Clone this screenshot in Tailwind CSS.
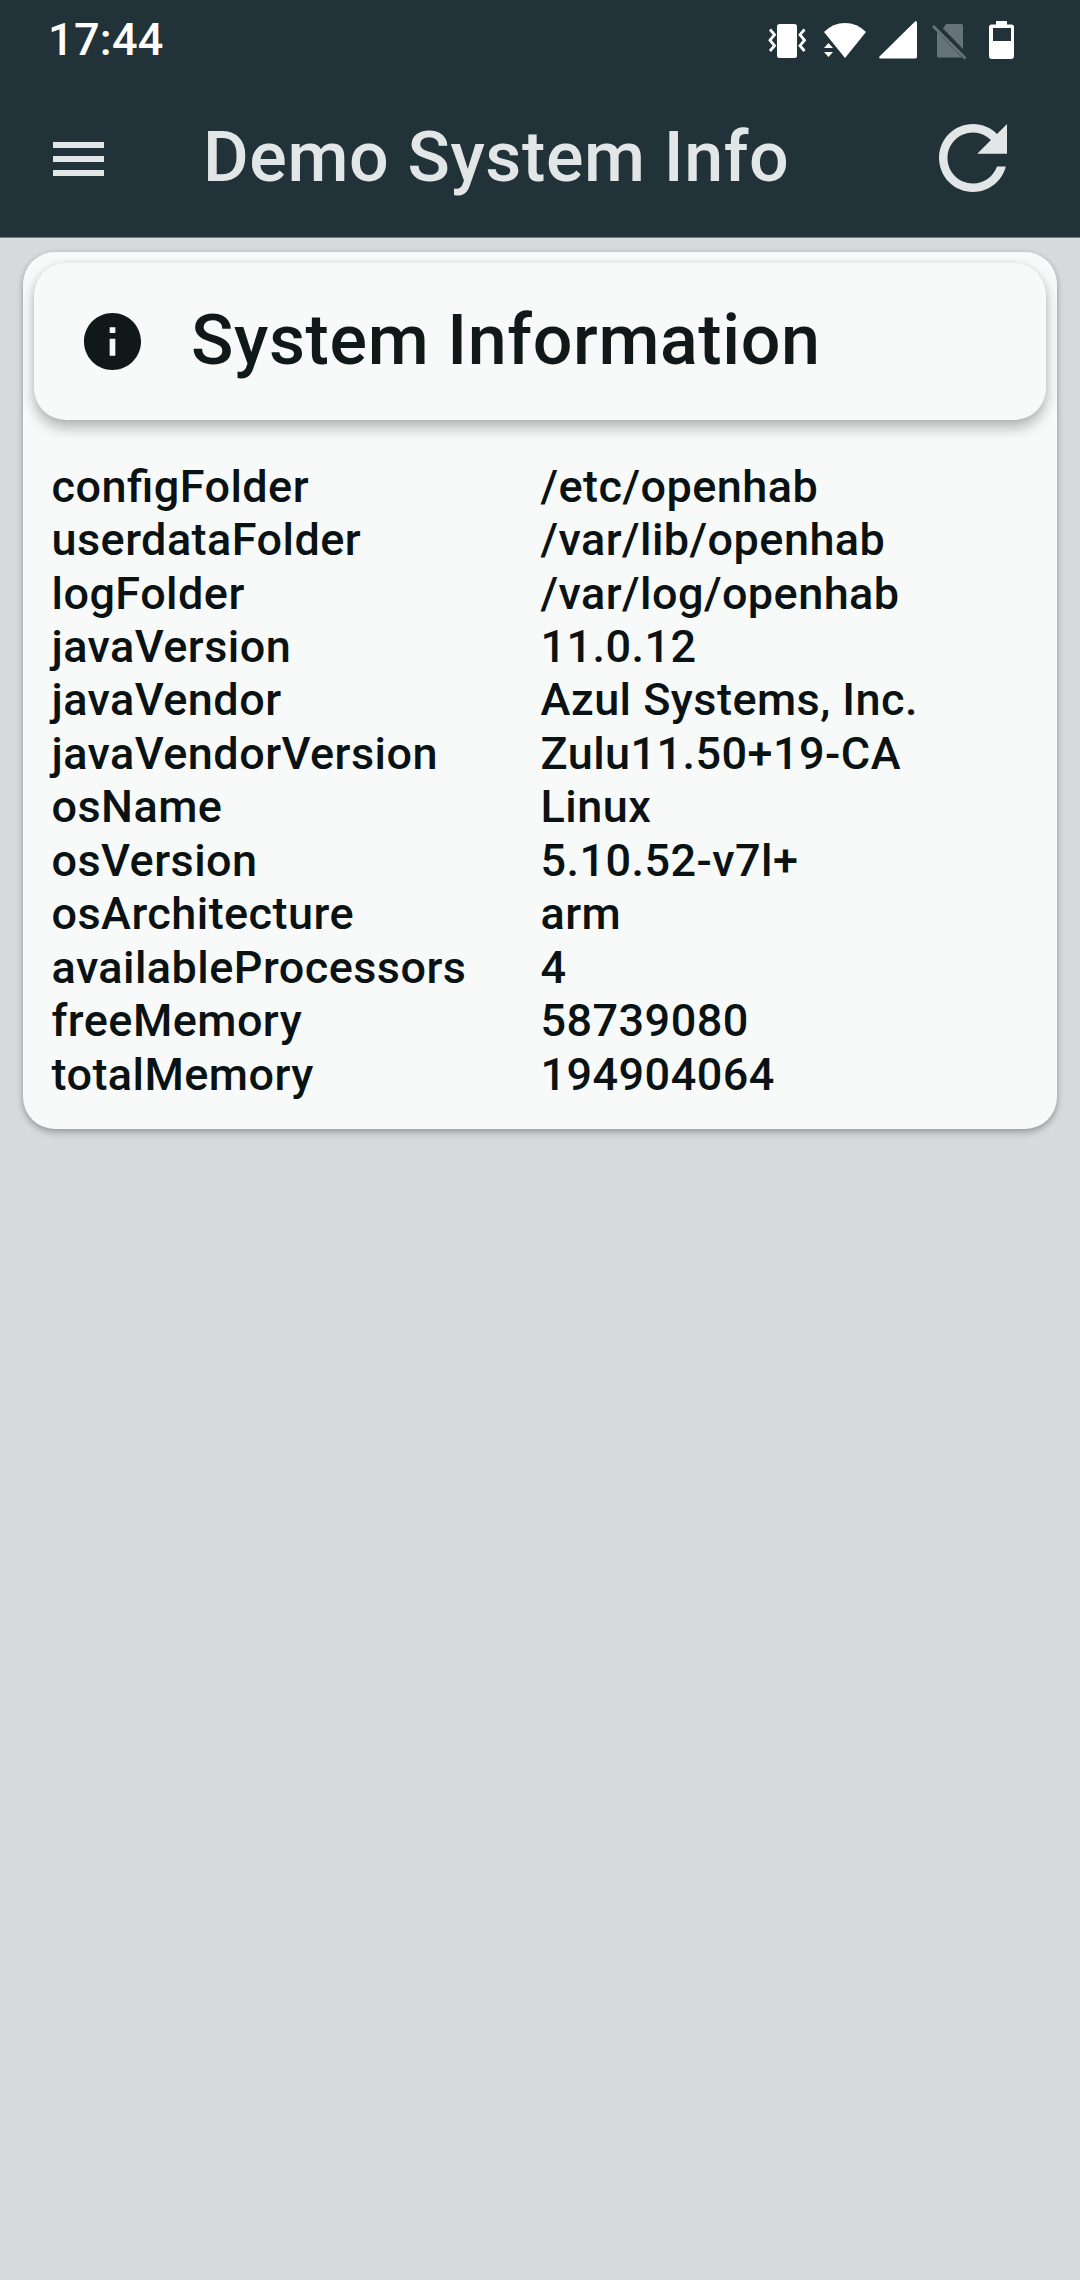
<!DOCTYPE html>
<html lang="en">
<head>
<meta charset="utf-8">
<title>Demo System Info</title>
<script src="https://cdn.jsdelivr.net/npm/@tailwindcss/browser@4"></script>
</head>
<body class="min-h-screen bg-[#d8dbdc] font-[Roboto,sans-serif] font-medium">
<header class="flex h-[238px] flex-col border-b border-[#6f7d80] bg-[#213239]">
  <div class="flex h-20 items-center pl-12">
    <span class="text-[45px] leading-[80px] tracking-[0.3px] text-white">17:44</span>
    <svg class="ml-auto h-20 w-[330px]" viewBox="750 0 330 80" fill="#fff">
      <rect x="777" y="24" width="20" height="34" rx="2.5"/>
      <path d="M770 29.500l4.500 5.200-4.500 5.500 4.500 5.500-4.500 5.300M804.500 29.500l-4.500 5.200 4.500 5.500-4.500 5.500 4.500 5.300" fill="none" stroke="#fff" stroke-width="2.8"/>
      <path d="M845 58L824 32Q833 23 845 23T866 32Z"/>
      <path d="M824 48l4.500-5 4.500 5zM824 52h9l-4.500 5z"/>
      <path d="M915.500 21Q917 21 917 23V57Q917 58.500 915 58.500H880Q878.500 58 879.500 56.500Z"/>
      <g fill="#667378"><path d="M946 24H961.500Q963 24 963 25.500V49L943 28.500Z"/><path d="M937 32L962 57.500H938.500Q937 57.500 937 56Z"/><path d="M932 27l2-2 32.500 32.500-2 2z"/></g>
      <path fill-rule="evenodd" d="M996 21h11v3.500h4.500q2.500 0 2.500 2.500v29q0 3-3 3h-19q-3 0-3-3v-29q0-2.500 2.500-2.500h4.500zM993 28v13h18v-13z"/>
    </svg>
  </div>
  <div class="flex flex-1 items-center text-[#e3e6e7]">
    <svg class="mt-px ml-[53px] h-[34px] w-[51px]" viewBox="0 0 51 34" fill="currentColor"><path d="M0 0h51v6H0zM0 14h51v6H0zM0 28h51v6H0z"/></svg>
    <h1 class="mb-[3px] ml-[99px] text-[70px] leading-[82px] tracking-[0.63px]">Demo System Info</h1>
    <svg class="mr-[73px] mb-px ml-auto h-[68px] w-[68px]" viewBox="4 4 16 16" preserveAspectRatio="none" fill="currentColor"><path d="M17.650 6.350C16.200 4.900 14.210 4 12 4c-4.420 0-7.990 3.580-7.990 8s3.570 8 7.990 8c3.730 0 6.840-2.550 7.730-6h-2.080c-.82 2.330-3.040 4-5.650 4-3.310 0-6-2.690-6-6s2.690-6 6-6c1.660 0 3.140.690 4.220 1.780L13 11h7V4l-2.350 2.350z"/></svg>
  </div>
</header>
<main class="px-[23px] pt-3.5">
  <section class="h-[877px] rounded-[32px] bg-[#f8faf9] px-[11px] pt-[11px] shadow-[0_4px_7px_rgba(0,0,0,0.25),0_0_5px_rgba(0,0,0,0.1)]">
    <div class="flex h-[157px] items-center rounded-[32px] bg-[#f8faf9] pl-[50px] text-[#101819] shadow-[0_8px_14px_rgba(0,0,0,0.27),0_0_6px_rgba(0,0,0,0.08)]">
      <svg class="size-[57px]" viewBox="2 2 20 20" fill="currentColor"><path d="M12 2C6.480 2 2 6.480 2 12s4.480 10 10 10 10-4.480 10-10S17.520 2 12 2zm1 15h-2v-6h2v6zm0-8h-2V7h2v2z"/></svg>
      <h2 class="mb-[3px] ml-[50px] text-[70px] leading-[82px] tracking-[0.63px]">System Information</h2>
    </div>
    <dl class="mt-[39.71px] grid grid-cols-[489px_1fr] pl-[17.5px] text-[45px] leading-[53.44px] tracking-[0.45px] text-[#0b1213] [font-feature-settings:'liga'_1]">
      <dt>configFolder</dt><dd>/etc/openhab</dd>
      <dt>userdataFolder</dt><dd>/var/lib/openhab</dd>
      <dt>logFolder</dt><dd>/var/log/openhab</dd>
      <dt>javaVersion</dt><dd>11.0.12</dd>
      <dt>javaVendor</dt><dd>Azul Systems, Inc.</dd>
      <dt>javaVendorVersion</dt><dd>Zulu11.50+19-CA</dd>
      <dt>osName</dt><dd>Linux</dd>
      <dt>osVersion</dt><dd>5.10.52-v7l+</dd>
      <dt>osArchitecture</dt><dd>arm</dd>
      <dt>availableProcessors</dt><dd>4</dd>
      <dt>freeMemory</dt><dd>58739080</dd>
      <dt>totalMemory</dt><dd>194904064</dd>
    </dl>
  </section>
</main>
</body>
</html>
